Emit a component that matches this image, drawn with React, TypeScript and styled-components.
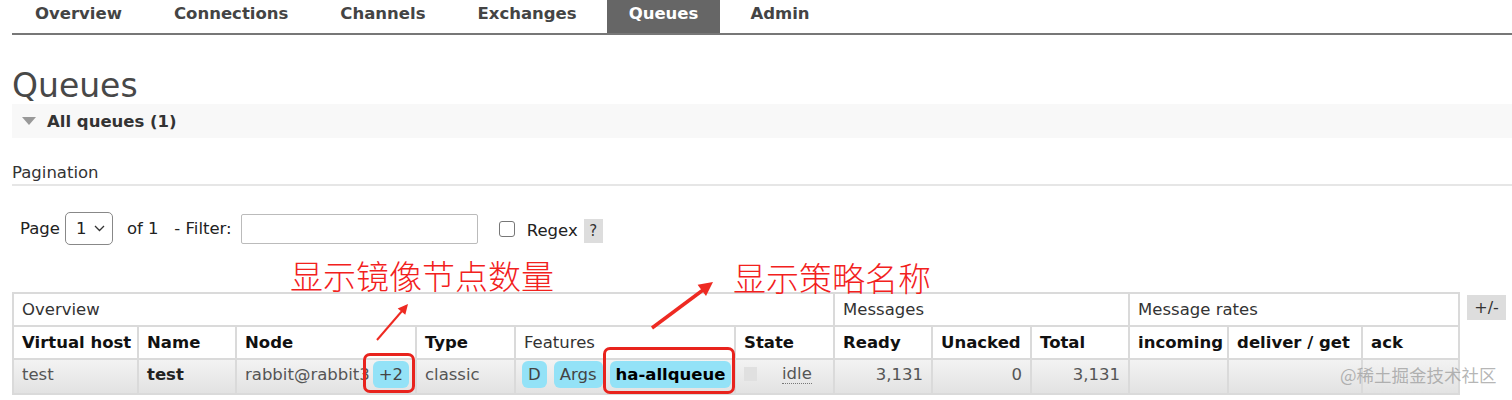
import styled, { createGlobalStyle } from 'styled-components';

const GlobalStyle = createGlobalStyle`
  html, body {
    margin: 0;
    padding: 0;
    background: #fff;
  }
  body {
    font-family: "DejaVu Sans", Verdana, sans-serif;
    color: #444;
  }
`;

const Page = styled.div`
  position: relative;
  width: 1512px;
  height: 400px;
  overflow: hidden;
  padding-left: 12px;
  box-sizing: border-box;
`;

const Nav = styled.ul`
  display: flex;
  gap: 8px;
  margin: 0;
  padding: 0 0 0 1px;
  list-style: none;
  height: 33px;
  border-bottom: 2px solid #777;
`;

const Tab = styled.li<{ $active?: boolean }>`
  padding: 0 22px;
  height: 33px;
  line-height: 28px;
  font-size: 16.5px;
  font-weight: bold;
  color: ${(p) => (p.$active ? '#fff' : '#444')};
  background: ${(p) => (p.$active ? '#666' : 'transparent')};
`;

const Heading = styled.h1`
  margin: 33px 0 0;
  font-size: 33px;
  font-weight: normal;
  line-height: 36px;
  color: #484848;
`;

const SectionHeader = styled.div`
  display: flex;
  align-items: center;
  gap: 11px;
  height: 34px;
  padding-left: 10px;
  background: #f8f8f8;
  font-size: 16.5px;
  font-weight: bold;
  color: #333;
`;

const Triangle = styled.span`
  width: 0;
  height: 0;
  border-left: 7px solid transparent;
  border-right: 7px solid transparent;
  border-top: 8px solid #999;
`;

const SubTitle = styled.div`
  margin-top: 24px;
  line-height: 22px;
  font-size: 16.5px;
  color: #333;
  border-bottom: 2px solid #e6e6e6;
`;

const FilterRow = styled.div`
  display: flex;
  align-items: center;
  height: 33px;
  margin-top: 26px;
  padding-left: 8px;
  font-size: 16.5px;
  color: #222;
`;

const PageSelect = styled.div`
  display: flex;
  align-items: center;
  justify-content: space-between;
  box-sizing: border-box;
  width: 48px;
  height: 33px;
  margin: 0 14px 0 5px;
  padding: 0 7px 0 10px;
  border: 1px solid #888;
  border-radius: 5px;
  background: #fff;
`;

const FilterInput = styled.input`
  box-sizing: border-box;
  width: 237px;
  height: 30px;
  margin: 0 21px 0 9px;
  border: 1px solid #bbb;
  border-radius: 2px;
  outline: none;
`;

const Check = styled.span`
  box-sizing: border-box;
  width: 16px;
  height: 16px;
  margin-right: 12px;
  border: 1px solid #777;
  border-radius: 3px;
  background: #fff;
`;

const Regex = styled.span`
  margin-top: 4px;
`;

const Help = styled.span`
  display: flex;
  align-items: center;
  justify-content: center;
  width: 19px;
  height: 24px;
  margin: 4px 0 0 6px;
  background: #ddd;
  font-size: 15px;
  color: #333;
`;

const TableArea = styled.div`
  display: flex;
  align-items: flex-start;
  gap: 7px;
  margin-top: 47px;
`;

const Table = styled.table`
  width: 1446px;
  table-layout: fixed;
  border-collapse: collapse;
  font-size: 16.5px;
`;

const GroupCell = styled.th`
  height: 31px;
  padding: 0 8px;
  text-align: left;
  font-weight: normal;
  color: #333;
  border: 2px solid #dadada;
  background: #fff;
`;

const HeadCell = styled.th`
  height: 31px;
  padding: 0 8px;
  text-align: left;
  font-weight: bold;
  color: #111;
  border: 2px solid #dadada;
  background: #fff;
  white-space: nowrap;
`;

const DataRow = styled.tr`
  background: linear-gradient(#f3f3f3, #e2e2e2);
`;

const Cell = styled.td<{ $align?: 'left' | 'right'; $bold?: boolean }>`
  height: 28px;
  padding: 0 8px 5px;
  text-align: ${(p) => p.$align ?? 'left'};
  font-weight: ${(p) => (p.$bold ? 'bold' : 'normal')};
  color: ${(p) => (p.$bold ? '#222' : '#555')};
  border: 2px solid #dadada;
  white-space: nowrap;
  overflow: hidden;
  vertical-align: middle;
`;

const Badges = styled.div`
  display: flex;
  align-items: center;
  gap: 7px;
  margin-left: -2px;
`;

const Badge = styled.span<{ $bold?: boolean }>`
  display: inline-flex;
  align-items: center;
  height: 27px;
  padding: 0 6px;
  border-radius: 6px;
  background: #93e2f7;
  font-weight: ${(p) => (p.$bold ? 'bold' : 'normal')};
  color: ${(p) => (p.$bold ? '#000' : '#444')};
`;

const NodeLine = styled.div`
  display: flex;
  align-items: center;
  gap: 3px;
`;

const StateLine = styled.div`
  display: flex;
  align-items: center;
`;

const StateDot = styled.span`
  width: 13px;
  height: 14px;
  background: #e0e0e0;
`;

const Idle = styled.span`
  margin-left: 25px;
  border-bottom: 1px dotted #777;
  line-height: 18px;
`;

const ToggleButton = styled.span`
  display: flex;
  align-items: center;
  justify-content: center;
  width: 39px;
  height: 25px;
  margin-top: 3px;
  background: #ddd;
  font-size: 16px;
  color: #333;
`;

const Overlay = styled.div`
  position: absolute;
  inset: 0;
  pointer-events: none;
`;

const Note = styled.span<{ $x: number; $y: number }>`
  position: absolute;
  left: ${(p) => p.$x}px;
  top: ${(p) => p.$y}px;
  font-family: "Noto Sans CJK SC", sans-serif;
  font-size: 33px;
  font-weight: 300;
  line-height: 36px;
  color: #f2211d;
  white-space: nowrap;
`;

const RedBox = styled.span<{ $x: number; $y: number; $w: number; $h: number }>`
  position: absolute;
  left: ${(p) => p.$x}px;
  top: ${(p) => p.$y}px;
  width: ${(p) => p.$w}px;
  height: ${(p) => p.$h}px;
  box-sizing: border-box;
  border: 3px solid #e8231d;
  border-radius: 7px;
`;

const Arrows = styled.svg`
  position: absolute;
  left: 0;
  top: 0;
`;

const Watermark = styled.span`
  position: absolute;
  left: 1340px;
  top: 364px;
  font-family: "Noto Sans CJK SC", sans-serif;
  font-size: 17.5px;
  line-height: 22px;
  color: rgba(150, 150, 150, 0.7);
  white-space: nowrap;
`;

const tabs = ['Overview', 'Connections', 'Channels', 'Exchanges', 'Queues', 'Admin'];
const colWidths = [125, 98, 180, 99, 220, 99, 98, 99, 98, 99, 134, 97];

export default function App() {
  return (
    <Page>
      <GlobalStyle />
      <Nav>
        {tabs.map((t) => (
          <Tab key={t} $active={t === 'Queues'}>
            {t}
          </Tab>
        ))}
      </Nav>

      <Heading>Queues</Heading>
      <SectionHeader>
        <Triangle />
        All queues (1)
      </SectionHeader>

      <SubTitle>Pagination</SubTitle>
      <FilterRow>
        Page
        <PageSelect>
          <span>1</span>
          <svg width="11" height="7" viewBox="0 0 11 7">
            <path d="M1 1 L5.5 5.5 L10 1" fill="none" stroke="#333" strokeWidth="1.3" />
          </svg>
        </PageSelect>
        of 1&nbsp;&nbsp; - Filter:
        <FilterInput />
        <Check />
        <Regex>Regex</Regex>
        <Help>?</Help>
      </FilterRow>

      <TableArea>
        <Table>
          <colgroup>
            {colWidths.map((w, i) => (
              <col key={i} style={{ width: w }} />
            ))}
          </colgroup>
          <thead>
            <tr>
              <GroupCell colSpan={6}>Overview</GroupCell>
              <GroupCell colSpan={3}>Messages</GroupCell>
              <GroupCell colSpan={3}>Message rates</GroupCell>
            </tr>
            <tr>
              <HeadCell>Virtual host</HeadCell>
              <HeadCell>Name</HeadCell>
              <HeadCell>Node</HeadCell>
              <HeadCell>Type</HeadCell>
              <GroupCell>Features</GroupCell>
              <HeadCell>State</HeadCell>
              <HeadCell>Ready</HeadCell>
              <HeadCell>Unacked</HeadCell>
              <HeadCell>Total</HeadCell>
              <HeadCell>incoming</HeadCell>
              <HeadCell>deliver / get</HeadCell>
              <HeadCell>ack</HeadCell>
            </tr>
          </thead>
          <tbody>
            <DataRow>
              <Cell>test</Cell>
              <Cell $bold>test</Cell>
              <Cell>
                <NodeLine>
                  rabbit@rabbit3
                  <Badge>+2</Badge>
                </NodeLine>
              </Cell>
              <Cell>classic</Cell>
              <Cell>
                <Badges>
                  <Badge>D</Badge>
                  <Badge>Args</Badge>
                  <Badge $bold>ha-allqueue</Badge>
                </Badges>
              </Cell>
              <Cell>
                <StateLine>
                  <StateDot />
                  <Idle>idle</Idle>
                </StateLine>
              </Cell>
              <Cell $align="right">3,131</Cell>
              <Cell $align="right">0</Cell>
              <Cell $align="right">3,131</Cell>
              <Cell />
              <Cell />
              <Cell />
            </DataRow>
          </tbody>
        </Table>
        <ToggleButton>+/-</ToggleButton>
      </TableArea>

      <Overlay>
        <Note $x={290} $y={257}>显示镜像节点数量</Note>
        <Note $x={733} $y={259}>显示策略名称</Note>
        <RedBox $x={363} $y={353} $w={52} $h={40} />
        <RedBox $x={603} $y={347} $w={132} $h={47} />
        <Arrows width="1512" height="400" viewBox="0 0 1512 400">
          <line x1="377" y1="340" x2="402" y2="311" stroke="#ee2a22" strokeWidth="2" />
          <polygon points="408,304 405.3,314.8 397.7,308.4" fill="#ee2a22" />
          <line x1="652" y1="328" x2="703" y2="290" stroke="#ee2a22" strokeWidth="3.5" />
          <polygon points="713,282 706,296 697.6,284.8" fill="#ee2a22" />
        </Arrows>
        <Watermark>@稀土掘金技术社区</Watermark>
      </Overlay>
    </Page>
  );
}
